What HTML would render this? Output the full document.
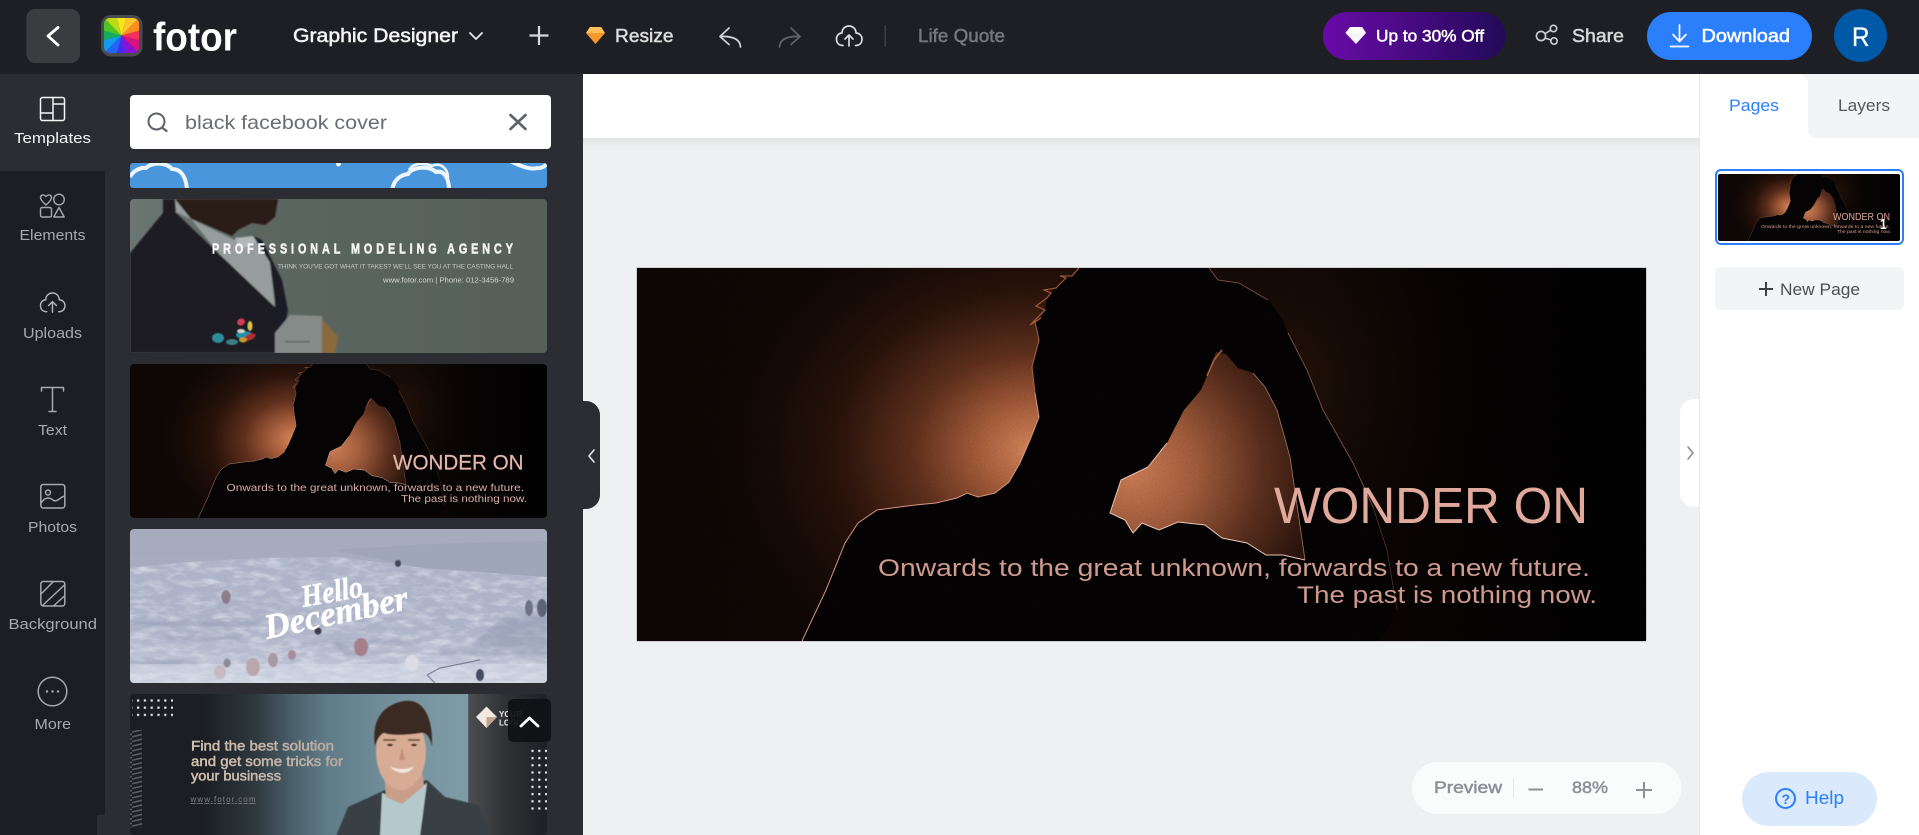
<!DOCTYPE html>
<html lang="en">
<head>
<meta charset="utf-8">
<title>Fotor Graphic Designer</title>
<style>
html,body{margin:0;padding:0;width:1919px;height:835px;overflow:hidden;background:#eff0f2}
svg{display:block;position:absolute;left:0;top:0}
text{font-family:"Liberation Sans","DejaVu Sans",sans-serif}
.m{stroke-width:.5px}
.ic{fill:none;stroke-linecap:round;stroke-linejoin:round}
</style>
</head>
<body>
<svg width="1919" height="835" viewBox="0 0 1919 835" xmlns="http://www.w3.org/2000/svg">
<defs>
  <linearGradient id="promo" x1="0" x2="1"><stop offset="0" stop-color="#6a0aa8"/><stop offset="1" stop-color="#220a58"/></linearGradient>
  <linearGradient id="topshadow" x1="0" x2="0" y1="0" y2="1"><stop offset="0" stop-color="#e2e3e5"/><stop offset="1" stop-color="#eff0f2"/></linearGradient>
  <linearGradient id="wbase" x1="0" x2="1"><stop offset="0" stop-color="#0e0705"/><stop offset=".6" stop-color="#120906"/><stop offset=".82" stop-color="#060303"/><stop offset="1" stop-color="#020203"/></linearGradient>
  <radialGradient id="wglow" gradientUnits="userSpaceOnUse" cx="0" cy="0" r="1" gradientTransform="translate(1035 450) scale(320 255)">
    <stop offset="0" stop-color="#d8875c"/><stop offset=".18" stop-color="#a45c3b"/><stop offset=".38" stop-color="#5f301d"/><stop offset=".62" stop-color="#2b140b" stop-opacity=".95"/><stop offset="1" stop-color="#1a0c07" stop-opacity="0"/>
  </radialGradient>
  <radialGradient id="whole" gradientUnits="userSpaceOnUse" cx="0" cy="0" r="1" gradientTransform="translate(1130 470) scale(190 170)">
    <stop offset="0" stop-color="#cc7d56"/><stop offset=".35" stop-color="#a05c3c"/><stop offset=".7" stop-color="#5c2f1e"/><stop offset="1" stop-color="#2a150d"/>
  </radialGradient>
  <radialGradient id="wright" gradientUnits="userSpaceOnUse" cx="0" cy="0" r="1" gradientTransform="translate(1290 380) scale(190 240)">
    <stop offset="0" stop-color="#241209"/><stop offset="1" stop-color="#0a0504" stop-opacity="0"/>
  </radialGradient>
  <linearGradient id="t2bg" x1="0" x2="1"><stop offset="0" stop-color="#6b7672"/><stop offset=".3" stop-color="#5c6661"/><stop offset="1" stop-color="#566059"/></linearGradient>
  <linearGradient id="t4sky" x1="0" x2="0" y1="0" y2="1"><stop offset="0" stop-color="#a5abbd"/><stop offset="1" stop-color="#aeb4c6"/></linearGradient>
  <linearGradient id="t4low" x1="0" x2="0" y1="0" y2="1"><stop offset="0" stop-color="#aeb3c8"/><stop offset=".55" stop-color="#adb3c8"/><stop offset="1" stop-color="#c6cbdb"/></linearGradient>
  <linearGradient id="t5bg" x1="0" x2="1"><stop offset="0" stop-color="#1b1e22"/><stop offset=".175" stop-color="#1b1e22"/><stop offset=".3" stop-color="#2e383e"/><stop offset=".39" stop-color="#4a606a"/><stop offset=".47" stop-color="#5f7b87"/><stop offset=".65" stop-color="#76929e"/><stop offset=".81" stop-color="#7f9ba6"/><stop offset=".812" stop-color="#4b4e51"/><stop offset=".9" stop-color="#2f3235"/><stop offset="1" stop-color="#1d2024"/></linearGradient>
  <linearGradient id="t5txt" gradientUnits="userSpaceOnUse" x1="191" x2="343" y1="0" y2="0"><stop offset="0" stop-color="#d2c0b0"/><stop offset="1" stop-color="#b8a99e"/></linearGradient>
  <clipPath id="cWonder"><rect x="637" y="268" width="1009" height="373"/></clipPath>
  <clipPath id="cT1"><rect x="130" y="163" width="417" height="25" rx="3"/></clipPath>
  <clipPath id="cT2"><rect x="130" y="199" width="417" height="154" rx="4"/></clipPath>
  <clipPath id="cT3"><rect x="130" y="364" width="417" height="154" rx="4"/></clipPath>
  <clipPath id="cT4"><rect x="130" y="529" width="417" height="154" rx="4"/></clipPath>
  <clipPath id="cT5"><rect x="130" y="694" width="417" height="141" rx="4"/></clipPath>
  <clipPath id="cLogo"><rect x="104" y="18" width="35" height="35" rx="6"/></clipPath>
  <clipPath id="cThumb"><rect x="1718" y="174" width="182" height="67" rx="2"/></clipPath>
  <clipPath id="cMtn"><polygon points="130,568 175,563 258,558 338,557 425,568 547,577 547,683 130,683"/></clipPath>
  <filter id="snow" x="0" y="0" width="1" height="1"><feTurbulence type="fractalNoise" baseFrequency=".06 .15" numOctaves="4" seed="7"/><feColorMatrix values="0 0 0 0 .86  0 0 0 0 .88  0 0 0 0 .94  2 0 0 0 -.8"/></filter>
  <filter id="snowd" x="0" y="0" width="1" height="1"><feTurbulence type="fractalNoise" baseFrequency=".05 .22" numOctaves="3" seed="21"/><feColorMatrix values="0 0 0 0 .42  0 0 0 0 .47  0 0 0 0 .58  3 0 0 0 -1.4"/></filter>
  <filter id="grain" x="0" y="0" width="1" height="1"><feTurbulence type="fractalNoise" baseFrequency=".9" numOctaves="2" seed="3"/><feColorMatrix values="0 0 0 0 0  0 0 0 0 0  0 0 0 0 0  1.6 0 0 0 -.72"/></filter>
  <filter id="soft"><feGaussianBlur stdDeviation=".9"/></filter>
  <filter id="soft2"><feGaussianBlur stdDeviation=".5"/></filter>
  <filter id="soft3"><feGaussianBlur stdDeviation="1.5"/></filter>
  <pattern id="dots" width="6.8" height="7.2" patternUnits="userSpaceOnUse"><rect x="1" y="1" width="2.2" height="2.2" fill="#e4e6e8"/></pattern>
  <pattern id="stripes" width="12" height="4.7" patternUnits="userSpaceOnUse"><path d="M0 3.6 L12 .8" stroke="#5a5f63" stroke-width="1.6"/></pattern>

  <g id="wonderImg">
    <rect x="637" y="268" width="1009" height="373" fill="url(#wbase)"/>
    <rect x="637" y="268" width="1009" height="373" fill="url(#wright)"/>
    <rect x="637" y="268" width="1009" height="373" fill="url(#wglow)"/>
    <polygon fill="#050303" points="802,641 826,590 845,543 858,523 877,510 915,505 936,503 957,498 967,493 978,497 995,493 1009,482 1020,463 1030,440 1039,417 1035,393 1032,367 1039,340 1035,322 1041,318 1045,310 1047,298 1051,293 1056,288 1066,278 1072,276 1079,268 1209,268 1218,280 1239,283 1268,300 1283,320 1288,333 1307,370 1323,410 1353,463 1373,507 1387,550 1397,610 1380,641"/>
    <polygon fill="url(#whole)" points="1207,376 1201,390 1184,410 1167,443 1148,467 1121,480 1110,513 1125,520 1133,533 1142,523 1159,530 1178,522 1205,525 1222,538 1247,543 1266,555 1283,555 1305,560 1290,457 1277,410 1265,387 1253,373 1238,368 1226,354 1216,352"/>
    <path d="M802 641 L826 590 L845 543 L858 523 L877 510 L915 505 L936 503 L957 498 L967 493 L978 497 L995 493 L1009 482 L1020 463 L1030 440 L1039 417 L1035 393" fill="none" stroke="#d89a82" stroke-width="1"/>
    <path d="M1035 393 L1032 367 L1039 340 L1035 322 L1041 318 L1030 325 L1045 310 L1036 306 L1047 298 L1051 293 L1044 290 L1056 288 L1066 278 L1060 276 L1072 276 L1079 268" fill="none" stroke="#a8603e" stroke-width="1.1"/>
    <path d="M1167 443 L1148 467 L1121 480 L1110 513 L1125 520 L1133 533 L1142 523 L1159 530 L1178 522 L1205 525 L1222 538 L1247 543 L1266 555 L1283 555 L1305 560" fill="none" stroke="#efc8b8" stroke-width="1"/>
    <path d="M1305 560 L1290 457 L1277 410 L1265 387 L1253 373" fill="none" stroke="#c89484" stroke-width=".8" opacity=".8"/>
    <path d="M1209 268 L1218 280 L1239 283 L1268 300 M1288 333 L1307 370 L1323 410 L1353 463 L1373 507" fill="none" stroke="#96604e" stroke-width=".9" opacity=".85"/>
    <path d="M1373 507 L1387 550 L1397 610" fill="none" stroke="#5a3a2e" stroke-width=".7"/>
    <path d="M1207 376 L1214 360 L1222 350" fill="none" stroke="#a8603e" stroke-width="1.6"/>
  </g>
</defs>

<!-- base areas -->
<rect width="1919" height="835" fill="#eff0f2"/>
<rect width="1919" height="74" fill="#1e1f24"/>
<rect x="0" y="74" width="105" height="761" fill="#1d1e23"/>
<rect x="0" y="74" width="105" height="97" fill="#2c2d32"/>
<rect x="105" y="74" width="478" height="761" fill="#2c2d32"/>
<rect x="97" y="815" width="8" height="20" fill="#2c2d32"/>

<!-- top white strip -->
<rect x="583" y="138" width="1116" height="9" fill="url(#topshadow)"/>
<rect x="583" y="74" width="1116" height="64" fill="#fff"/>

<!-- right panel -->
<rect x="1699" y="74" width="220" height="761" fill="#fff"/>
<rect x="1699" y="74" width="1" height="761" fill="#e6e7e9"/>
<path d="M1795 74H1919V138H1816a8 8 0 0 1-8-8V138H1795Z" fill="#f3f4f6"/>
<path d="M1700 74H1798a10 10 0 0 1 10 10V138H1700Z" fill="#fff"/>
<text x="1729" y="111" font-size="17" fill="#2b7ffb" textLength="50" lengthAdjust="spacingAndGlyphs">Pages</text>
<text x="1838" y="111" font-size="17" fill="#55575e" textLength="52" lengthAdjust="spacingAndGlyphs">Layers</text>

<rect x="1716" y="170" width="187" height="74" rx="5" fill="#fff" stroke="#2b7ffb" stroke-width="2"/>
<g clip-path="url(#cThumb)">
  <use href="#wonderImg" transform="translate(1718 174) scale(.1804) translate(-637 -268)"/>
  <text x="1833" y="220" font-size="10.5" fill="#dba89c" textLength="57" lengthAdjust="spacingAndGlyphs">WONDER ON</text>
  <text x="1761" y="228" font-size="4.8" fill="#cf9a8e" textLength="129" lengthAdjust="spacingAndGlyphs">Onwards to the great unknown, forwards to a new future.</text>
  <text x="1837" y="233" font-size="4.8" fill="#cf9a8e" textLength="54" lengthAdjust="spacingAndGlyphs">The past is nothing now.</text>
  <text x="1880" y="229" font-size="15" font-weight="700" fill="#fff" textLength="6.5" lengthAdjust="spacingAndGlyphs">1</text>
</g>

<rect x="1715" y="267" width="189" height="43" rx="6" fill="#f3f4f6"/>
<path d="M1766 282V296M1759 289H1773" stroke="#3e4046" stroke-width="2" fill="none"/>
<text x="1780" y="295" font-size="17" fill="#4c4e55" textLength="80" lengthAdjust="spacingAndGlyphs">New Page</text>

<rect x="1742" y="772" width="135" height="54" rx="27" fill="#dbe9fd"/>
<circle cx="1785.5" cy="798.5" r="9.5" fill="none" stroke="#2b7ffb" stroke-width="2"/>
<text x="1781.5" y="804" font-size="14" font-weight="700" fill="#2b7ffb">?</text>
<text x="1805" y="804" font-size="18" fill="#2b7ffb" textLength="39" lengthAdjust="spacingAndGlyphs">Help</text>

<!-- right collapse handle -->
<path d="M1699 399h-5a14 14 0 0 0-14 14v80a14 14 0 0 0 14 14h5Z" fill="#fff"/>
<path d="M1688 447l5 6-5 6" class="ic" stroke="#85878e" stroke-width="1.5"/>

<!-- main canvas -->
<rect x="636.5" y="267.5" width="1010" height="374" fill="#a9abaf"/>
<g clip-path="url(#cWonder)">
  <use href="#wonderImg"/>
  <rect x="637" y="268" width="1009" height="373" filter="url(#grain)" opacity=".18"/>
</g>
<text x="1274" y="523" font-size="51" fill="#e0a99c" textLength="314" lengthAdjust="spacingAndGlyphs">WONDER ON</text>
<text x="878" y="576" font-size="24" fill="#cf9a8e" textLength="712" lengthAdjust="spacingAndGlyphs">Onwards to the great unknown, forwards to a new future.</text>
<text x="1297" y="603" font-size="24" fill="#cf9a8e" textLength="300" lengthAdjust="spacingAndGlyphs">The past is nothing now.</text>

<!-- zoom pill -->
<rect x="1412" y="762" width="269.5" height="52" rx="26" fill="#fafbfb"/>
<text x="1434" y="793" font-size="17" fill="#8d8f98" stroke="#8d8f98" class="m" textLength="68" lengthAdjust="spacingAndGlyphs">Preview</text>
<rect x="1513" y="778" width="1" height="20" fill="#e8e8ea"/>
<rect x="1528.5" y="788.5" width="14.5" height="2" fill="#8d8f98"/>
<text x="1572" y="793" font-size="17" fill="#8d8f98" stroke="#8d8f98" class="m" textLength="36" lengthAdjust="spacingAndGlyphs">88%</text>
<path d="M1644 782V798M1636 790H1652" stroke="#8d8f98" stroke-width="2" fill="none"/>

<!-- HEADER -->
<rect x="26.5" y="9" width="53.5" height="54" rx="9" fill="#3b3c40"/>
<path d="M58 27.5L48 36L58 45" class="ic" stroke="#fff" stroke-width="2.8"/>

<rect x="101" y="15" width="41.5" height="41.5" rx="10" fill="#4a4b50"/>
<g clip-path="url(#cLogo)">
  <g transform="translate(121.5 35.5)">
    <polygon points="0,0 -7.8,-29 7.8,-29" fill="#fae41c"/>
    <polygon points="0,0 7.8,-29 21.2,-21.2" fill="#fdc62a"/>
    <polygon points="0,0 21.2,-21.2 29,-7.8" fill="#fd8d1f"/>
    <polygon points="0,0 29,-7.8 29,7.8" fill="#f4315b"/>
    <polygon points="0,0 29,7.8 21.2,21.2" fill="#d8117e"/>
    <polygon points="0,0 21.2,21.2 7.8,29" fill="#8a12d2"/>
    <polygon points="0,0 7.8,29 -7.8,29" fill="#4a2bee"/>
    <polygon points="0,0 -7.8,29 -21.2,21.2" fill="#2165f5"/>
    <polygon points="0,0 -21.2,21.2 -29,7.8" fill="#119cf0"/>
    <polygon points="0,0 -29,7.8 -29,-7.8" fill="#11ad5a"/>
    <polygon points="0,0 -29,-7.8 -21.2,-21.2" fill="#4fc525"/>
    <polygon points="0,0 -21.2,-21.2 -7.8,-29" fill="#bbdc14"/>
  </g>
</g>
<text x="153" y="50.5" font-size="40" font-weight="700" fill="#fff" textLength="84" lengthAdjust="spacingAndGlyphs">fotor</text>

<text x="293" y="42" font-size="19" fill="#f4f4f5" stroke="#f4f4f5" class="m" textLength="165" lengthAdjust="spacingAndGlyphs">Graphic Designer</text>
<path d="M470 33l6 6 6-6" class="ic" stroke="#e8e8e9" stroke-width="1.8"/>
<path d="M539 26V45M529.5 35.5H548.5" stroke="#d7d8d9" stroke-width="2.2" fill="none"/>

<polygon points="590,27 601,27 605,33 595.5,44 586,33" fill="#f59a2a"/>
<polygon points="590,27 601,27 605,33 586,33" fill="#fdc05a"/>
<text x="615" y="42" font-size="18" fill="#dcdcde" stroke="#dcdcde" class="m" textLength="58.5" lengthAdjust="spacingAndGlyphs">Resize</text>

<path d="M729 28L720 36.5L729 44.5M720 36.5C731 36 740 38 740.5 47" class="ic" stroke="#cfd0d2" stroke-width="1.8"/>
<path d="M791 28L800 36.5L791 44.5M800 36.5C789 36 780 38 779.5 47" class="ic" stroke="#606165" stroke-width="1.8"/>
<g class="ic" stroke="#dcdddf" stroke-width="1.7">
  <path d="M843 45.5C838 45.5 836.5 42 836.5 39C836.5 35.5 839 33 842 33C842 29 845 26 849 26C853 26 856 29 856 33C859 33 862 35.5 862 39C862 42.5 860 45.5 855.5 45.5"/>
  <path d="M849 46V35M845 39L849 35L853 39"/>
</g>
<rect x="884.5" y="25" width="1.5" height="22" fill="#3c3d41"/>
<text x="918" y="42" font-size="18" fill="#77787c" stroke="#77787c" class="m" textLength="87" lengthAdjust="spacingAndGlyphs">Life Quote</text>

<rect x="1323" y="12" width="182.5" height="48" rx="24" fill="url(#promo)"/>
<polygon points="1350,27 1362,27 1366,33 1356,44 1345.5,33" fill="#f6f4f8"/>
<polygon points="1350,27 1362,27 1366,33 1345.5,33" fill="#fff"/>
<text x="1376" y="41.5" font-size="16.5" fill="#fff" stroke="#fff" class="m" textLength="108" lengthAdjust="spacingAndGlyphs">Up to 30% Off</text>

<g class="ic" stroke="#cfd0d2" stroke-width="1.6">
  <circle cx="1541" cy="36" r="4.6"/><circle cx="1553.5" cy="28.5" r="3.2"/><circle cx="1554" cy="41" r="3.2"/>
  <path d="M1545.3 33.5L1550.7 30.2M1545.5 38.2L1551 40"/>
</g>
<text x="1572" y="42" font-size="18" fill="#d6d7d8" stroke="#d6d7d8" class="m" textLength="52" lengthAdjust="spacingAndGlyphs">Share</text>

<rect x="1647" y="12" width="165" height="48" rx="24" fill="#2b7ffb"/>
<path d="M1679.5 25V41M1673 34.5L1679.5 41.5L1686 34.5M1670.5 46.5H1688.5" class="ic" stroke="#fff" stroke-width="1.7"/>
<text x="1701.5" y="42" font-size="18" fill="#fff" stroke="#fff" class="m" textLength="88.5" lengthAdjust="spacingAndGlyphs">Download</text>

<circle cx="1860.5" cy="35.5" r="26.5" fill="#0059a6"/>
<text x="1852" y="46" font-size="27" fill="#fff" stroke="#fff" stroke-width=".3" textLength="17.5" lengthAdjust="spacingAndGlyphs">R</text>

<!-- NAV ICONS -->
<g class="ic" stroke="#f5f5f6" stroke-width="1.5">
  <rect x="40.5" y="97.5" width="24" height="23" rx="2"/>
  <path d="M53 97.5V120.5M40.5 113H53M53 104H64.5"/>
</g>
<text x="14" y="143" font-size="15" fill="#f4f4f5" textLength="77" lengthAdjust="spacingAndGlyphs">Templates</text>

<g class="ic" stroke="#a8a9ad" stroke-width="1.4">
  <path d="M46 205C42 201.5 40.5 199.5 40.5 197.5C40.5 195 43.5 193.8 46 196.5C48.5 193.8 51.5 195 51.5 197.5C51.5 199.5 50 201.5 46 205Z"/>
  <circle cx="59" cy="199.5" r="5.3"/>
  <rect x="40.5" y="207.5" width="11" height="9.5" rx="1.5"/>
  <path d="M59 207.5L64.2 217H53.8Z"/>
</g>
<text x="19.5" y="240" font-size="15" fill="#a8a9ad" textLength="66" lengthAdjust="spacingAndGlyphs">Elements</text>

<g class="ic" stroke="#b4b5b8" stroke-width="1.5" transform="translate(40 293) scale(.96) translate(-836 -26)">
  <path d="M843 45.5C838 45.5 836.5 42 836.5 39C836.5 35.5 839 33 842 33C842 29 845 26 849 26C853 26 856 29 856 33C859 33 862 35.5 862 39C862 42.5 860 45.5 855.5 45.5"/>
  <path d="M849 46V35M845 39L849 35L853 39"/>
</g>
<text x="23" y="338" font-size="15" fill="#a8a9ad" textLength="59" lengthAdjust="spacingAndGlyphs">Uploads</text>

<g class="ic" stroke="#a8a9ad" stroke-width="1.5">
  <path d="M41.5 391V387.5H63.5V391M52.5 387.5V411.5M49 411.5H56"/>
</g>
<text x="38" y="435" font-size="15" fill="#a8a9ad" textLength="29" lengthAdjust="spacingAndGlyphs">Text</text>

<g class="ic" stroke="#a8a9ad" stroke-width="1.5">
  <rect x="40.8" y="484.5" width="24" height="23.5" rx="2.5"/>
  <circle cx="48" cy="492.5" r="2.5"/>
  <path d="M41 503C45 497 49 497 53 500C57 503 60 497 64.8 496"/>
</g>
<text x="28" y="532" font-size="15" fill="#a8a9ad" textLength="49" lengthAdjust="spacingAndGlyphs">Photos</text>

<g class="ic" stroke="#a8a9ad" stroke-width="1.5">
  <rect x="40.8" y="581.5" width="24" height="24.5" rx="2.5"/>
  <path d="M41 594L53 582M43 605L64.5 585M54 605.5L64.5 596"/>
</g>
<text x="8.5" y="629" font-size="15" fill="#a8a9ad" textLength="88.5" lengthAdjust="spacingAndGlyphs">Background</text>

<circle cx="52.5" cy="691.5" r="14.3" fill="none" stroke="#a8a9ad" stroke-width="1.5"/>
<circle cx="47" cy="691.5" r="1.2" fill="#a8a9ad"/><circle cx="52.5" cy="691.5" r="1.2" fill="#a8a9ad"/><circle cx="58" cy="691.5" r="1.2" fill="#a8a9ad"/>
<text x="34.5" y="729" font-size="15" fill="#a8a9ad" textLength="36.5" lengthAdjust="spacingAndGlyphs">More</text>

<!-- SEARCH -->
<rect x="130" y="95" width="421" height="54" rx="4" fill="#fff"/>
<circle cx="156.5" cy="121.5" r="8" fill="none" stroke="#5d6069" stroke-width="2"/>
<path d="M162 127.5L166.5 131" stroke="#5d6069" stroke-width="2.2" stroke-linecap="round"/>
<text x="185" y="129" font-size="19.5" fill="#6a6c74" textLength="202" lengthAdjust="spacingAndGlyphs">black facebook cover</text>
<path d="M510.5 115L525.5 129M525.5 115L510.5 129" stroke="#5f616a" stroke-width="2.7" stroke-linecap="round"/>

<!-- TILE 1 -->
<g clip-path="url(#cT1)">
  <rect x="130" y="163" width="417" height="25" fill="#4a96dc"/>
  <g fill="none" stroke="#eef6fc" stroke-width="4">
    <path d="M130 177C133 171 140 167 146 168C152 162 166 162 172 169C180 169 186 175 187 190"/>
    <path d="M392 190C394 180 400 175 408 174C412 167 428 165 436 172C444 170 449 178 449 190"/>
    <path d="M409 170C414 162 425 163 432 166C440 162 448 168 448 178" stroke-width="2.6"/>
    <path d="M508 160C520 166 530 170 537 168C542 169 546 165 548 162"/>
  </g>
  <circle cx="338.5" cy="164" r="2.5" fill="#eef6fc"/>
</g>

<!-- TILE 2 -->
<g clip-path="url(#cT2)">
  <rect x="130" y="199" width="417" height="154" fill="url(#t2bg)"/>
  <g filter="url(#soft)">
    <polygon points="165,199 278,199 275,217 265,225 252,223 238,230 232,236 176,212" fill="#2a1a13"/>
    <polygon points="175,199 176,212 235,240 255,237 270,263 275,307 220,255" fill="#969d9c"/>
    <polygon points="235,238 253,236 260,240 240,250" fill="#b2b8b7"/>
    <polygon points="130,253 163,213 163,199 175,199 175,212 275,307 276,353 130,353" fill="#1e1a20"/>
    <polygon points="253,236 262,240 282,280 288,310 280,353 275,353 275,300 270,262" fill="#1e1c26"/>
    <polygon points="275,333 290,315 322,316 322,353 275,353" fill="#858b88"/>
    <polygon points="322,319 338,337 335,353 322,353" fill="#8a693b"/>
    <rect x="285" y="341" width="25" height="1.5" fill="#5f6461"/>
  </g>
  <g filter="url(#soft2)">
    <ellipse cx="244" cy="335" rx="8" ry="4" fill="#1f8fa8"/>
    <ellipse cx="218" cy="338" rx="6" ry="5" fill="#2f8f9c"/>
    <ellipse cx="232" cy="342" rx="6" ry="3" fill="#3a7f86"/>
    <ellipse cx="250" cy="337" rx="6" ry="3" fill="#b32d2a" transform="rotate(-25 250 337)"/>
    <ellipse cx="243" cy="340" rx="4" ry="2.5" fill="#c99a2c"/>
    <ellipse cx="241" cy="331" rx="4" ry="2" fill="#d6d7ca"/>
    <ellipse cx="241" cy="322" rx="4" ry="3.5" fill="#d23c55" transform="rotate(-30 241 322)"/>
    <ellipse cx="250" cy="326" rx="2.5" ry="5" fill="#d9c24a"/>
  </g>
  <text transform="translate(212 253.5) scale(.72 1)" font-size="15" font-weight="700" fill="#f3f4f3" stroke="#f3f4f3" stroke-width=".6" textLength="418" lengthAdjust="spacing">PROFESSIONAL MODELING AGENCY</text>
  <text x="278" y="268.5" font-size="6.6" fill="#c6cbc9" textLength="235" lengthAdjust="spacingAndGlyphs">THINK YOU'VE GOT WHAT IT TAKES? WE'LL SEE YOU AT THE CASTING HALL</text>
  <text x="383" y="282.5" font-size="7" fill="#d4d7d5" textLength="131" lengthAdjust="spacingAndGlyphs">www.fotor.com  |  Phone: 012-3456-789</text>
</g>

<!-- TILE 3 -->
<g clip-path="url(#cT3)">
  <use href="#wonderImg" transform="translate(130 364) scale(.4133) translate(-637 -268)"/>
  <text x="393" y="469.5" font-size="21" fill="#e4b7aa" stroke="#e4b7aa" stroke-width=".2" textLength="130.5" lengthAdjust="spacingAndGlyphs">WONDER ON</text>
  <text x="226.5" y="491" font-size="10" fill="#d9afa5" textLength="297.5" lengthAdjust="spacingAndGlyphs">Onwards to the great unknown, forwards to a new future.</text>
  <text x="401" y="502" font-size="10" fill="#d9afa5" textLength="126" lengthAdjust="spacingAndGlyphs">The past is nothing now.</text>
</g>

<!-- TILE 4 -->
<g clip-path="url(#cT4)">
  <rect x="130" y="529" width="417" height="154" fill="url(#t4sky)"/>
  <polygon points="335,550 430,544 547,541 547,580 430,570" fill="#9fa6b8"/>
  <polygon points="130,568 175,563 258,558 338,557 425,568 547,577 547,683 130,683" fill="url(#t4low)"/>
  <g clip-path="url(#cMtn)">
    <rect x="130" y="555" width="417" height="128" filter="url(#snow)" opacity=".6"/>
    <rect x="130" y="555" width="417" height="128" filter="url(#snowd)" opacity=".65"/>
    <path d="M130 660H190L200 665H130ZM330 640L360 652L390 655L345 655ZM470 645L500 620L547 615V650L500 650Z" fill="#8e96ae" opacity=".5" filter="url(#soft3)"/>
    <path d="M130 622H260V626H130ZM300 640H420V644H300ZM440 650H547V656H440ZM160 636H240V640H160Z" fill="#7f88a2" opacity=".3" filter="url(#soft3)"/>
    <rect x="130" y="664" width="417" height="19" fill="#dde0ea" opacity=".4"/>
    <path d="M427 675L440 668L480 660M427 675L435 683" stroke="#7e8398" stroke-width="1.2" fill="none"/>
  </g>
  <g filter="url(#soft2)">
    <ellipse cx="226" cy="597" rx="4.5" ry="7" fill="#8d7d88"/>
    <ellipse cx="398" cy="563.5" rx="3" ry="3.5" fill="#3f4658"/>
    <ellipse cx="529" cy="608" rx="4" ry="8" fill="#6c7388"/>
    <ellipse cx="542" cy="608" rx="5" ry="9" fill="#5d6478"/>
    <ellipse cx="361" cy="647" rx="7" ry="9" fill="#a57f89"/>
    <ellipse cx="412" cy="663" rx="7" ry="8" fill="#dcdde4"/>
    <ellipse cx="253" cy="667" rx="7" ry="9" fill="#b9a7ac"/>
    <ellipse cx="220" cy="672" rx="6" ry="7" fill="#c4bcc4"/>
    <ellipse cx="273" cy="660" rx="5" ry="7" fill="#a89aa4"/>
    <ellipse cx="292" cy="655" rx="4" ry="5" fill="#a88d98"/>
    <ellipse cx="227" cy="663" rx="3.5" ry="4.5" fill="#8f8a98"/>
    <ellipse cx="480" cy="675" rx="4" ry="6" fill="#444c60"/>
    <ellipse cx="318" cy="631" rx="3.5" ry="3.5" fill="#3f3a48"/>
  </g>
  <text transform="translate(303 607) rotate(-10)" style="font-family:'Liberation Serif',serif;font-style:italic;font-weight:700" font-size="31" fill="#fff" stroke="#fff" stroke-width=".5" textLength="62" lengthAdjust="spacingAndGlyphs">Hello</text>
  <text transform="translate(267 639) rotate(-12)" style="font-family:'Liberation Serif',serif;font-style:italic;font-weight:700" font-size="35" fill="#fff" stroke="#fff" stroke-width=".5" textLength="146" lengthAdjust="spacingAndGlyphs">December</text>
</g>

<!-- TILE 5 -->
<g clip-path="url(#cT5)">
  <rect x="130" y="694" width="417" height="141" fill="url(#t5bg)"/>
  <rect x="132" y="697" width="41" height="22" fill="url(#dots)"/>
  <rect x="528" y="745" width="21" height="66" fill="url(#dots)"/>
  <rect x="130" y="730" width="12" height="98" fill="url(#stripes)"/>
  <g filter="url(#soft2)">
    <polygon points="336,836 348,807 385,790 427,780 445,797 478,805 492,836" fill="#383f45"/>
    <polygon points="380,836 382,793 402,800 427,783 420,836" fill="#b5c8cb"/>
    <path d="M384 772L386 797L402 804L424 786L422 770Z" fill="#c99f8a"/>
    <ellipse cx="401" cy="752" rx="25" ry="38" fill="#d8ac94"/>
    <path d="M375 746C372 725 378 706 404 701C424 698 433 718 432 746C430 738 427 732 421 733C408 735 392 736 384 733C379 735 377 741 375 746Z" fill="#3b2b23"/>
    <path d="M383 740H396M408 740H420" stroke="#5a3d2d" stroke-width="1.6"/>
    <ellipse cx="390" cy="745" rx="3" ry="1.3" fill="#3c2a25"/><ellipse cx="414" cy="745" rx="3" ry="1.3" fill="#3c2a25"/>
    <path d="M390 766C396 770 408 770 414 766C410 775 396 775 390 766Z" fill="#f2e6de"/>
    <path d="M402 748L399 760H405Z" fill="#c08f78"/>
  </g>
  <polygon points="486.5,706.5 497,717 486.5,728 476,717" fill="#f1e8e0"/>
  <polygon points="486.5,717 497,717 486.5,728" fill="#c4a48c"/>
  <text x="499" y="717" font-size="8" font-weight="700" fill="#e6e7e8">YOUR</text>
  <text x="499" y="725.5" font-size="8" font-weight="700" fill="#e6e7e8">LOGO</text>
  <g font-size="14" fill="url(#t5txt)" stroke="url(#t5txt)" stroke-width=".5">
    <text x="191" y="750.5" textLength="143" lengthAdjust="spacingAndGlyphs">Find the best solution</text>
    <text x="191" y="766" textLength="152" lengthAdjust="spacingAndGlyphs">and get some tricks for</text>
    <text x="191" y="780.5" textLength="90" lengthAdjust="spacingAndGlyphs">your business</text>
  </g>
  <text x="190.5" y="802" font-size="8" fill="#7f8489" text-decoration="underline" textLength="65" lengthAdjust="spacing">www.fotor.com</text>
</g>

<!-- scroll up -->
<rect x="508" y="699" width="43" height="43" rx="5" fill="#101114" fill-opacity=".93"/>
<path d="M521 726L529.5 718L538 726" class="ic" stroke="#fff" stroke-width="2.8"/>

<!-- left collapse handle -->
<path d="M583 401h3a14 14 0 0 1 14 14v80a14 14 0 0 1-14 14h-3Z" fill="#2c2d32"/>
<path d="M594 450l-5 6 5 6" class="ic" stroke="#e6e6e8" stroke-width="1.6"/>
</svg>
</body>
</html>
